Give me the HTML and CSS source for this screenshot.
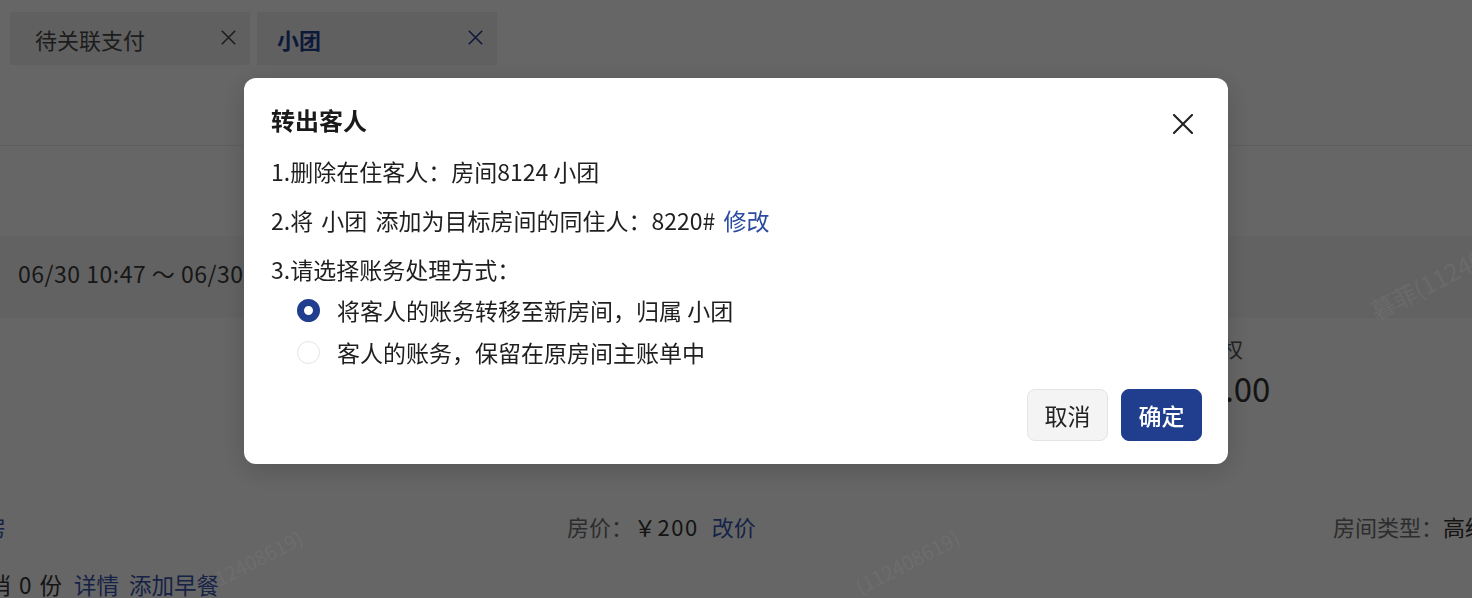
FILE: index.html
```html
<!DOCTYPE html>
<html lang="zh-CN">
<head>
<meta charset="utf-8">
<title>转出客人</title>
<link rel="stylesheet" href="styles.css">
</head>
<body>
<div class="page">
  <div class="tabbar">
    <div class="tab tab-first"><span class="tab-label">待关联支付</span>
      <svg class="tab-x" viewBox="0 0 15 15" width="15" height="15" aria-hidden="true"><path d="M0.8 0.8 L14.2 14.2 M14.2 0.8 L0.8 14.2" stroke="currentColor" stroke-width="1.6" fill="none"/></svg>
    </div>
    <div class="tab tab-active"><span class="tab-label">小团</span>
      <svg class="tab-x" viewBox="0 0 15 15" width="15" height="15" aria-hidden="true"><path d="M0.8 0.8 L14.2 14.2 M14.2 0.8 L0.8 14.2" stroke="currentColor" stroke-width="1.6" fill="none"/></svg>
    </div>
  </div>
  <div class="header"></div>
  <div class="spacer"></div>
  <div class="info-band"><span class="stay">06/30 10:47 ～ 06/30 12:00</span></div>
  <div class="stats">
    <div class="stat">
      <div class="stat-label">预授权</div>
      <div class="stat-value">¥0.00</div>
    </div>
  </div>
  <div class="detail-row">
    <div class="detail-cell cell-a"><a class="link">换房</a></div>
    <div class="detail-cell cell-b"><span class="label">房价：</span><span class="value price">￥200</span><a class="link link-price">改价</a></div>
    <div class="detail-cell cell-c"><span class="label">房间类型：</span><span class="value">高级大床房</span></div>
  </div>
  <div class="detail-row row-2">
    <div class="detail-cell cell-d"><span class="value spaced">已消 0 份</span><a class="link link-first">详情</a><a class="link link-tight">添加早餐</a></div>
  </div>
</div>

<div class="overlay">
  <div class="modal">
    <div class="modal-head">
      <div class="modal-title">转出客人</div>
      <svg class="modal-close" viewBox="0 0 20 20" width="20" height="20" aria-hidden="true">
        <path d="M1 1 L19 19 M19 1 L1 19" stroke="#222" stroke-width="2.1" stroke-linecap="square" fill="none"/>
      </svg>
    </div>
    <div class="modal-body">
      <div class="line">1.删除在住客人：房间8124 小团</div>
      <div class="line line-2">2.将 小团 添加为目标房间的同住人：8220# <a class="mlink">修改</a></div>
      <div class="line">3.请选择账务处理方式：</div>
      <div class="radios">
        <div class="radio-row"><span class="radio radio-on"></span><span>将客人的账务转移至新房间，归属 小团</span></div>
        <div class="radio-row"><span class="radio"></span><span>客人的账务，保留在原房间主账单中</span></div>
      </div>
    </div>
    <div class="modal-foot">
      <button class="btn btn-cancel">取消</button>
      <button class="btn btn-ok">确定</button>
    </div>
  </div>
</div>

<div class="wm wm-1">(112408619)</div>
<div class="wm wm-2">(112408619)</div>
<div class="wm wm-3">暮菲(112408619)</div>
</body>
</html>
```

FILE: styles.css
```css
* { box-sizing: border-box; }
html, body {
  margin: 0;
  padding: 0;
  width: 1472px;
  height: 598px;
  overflow: hidden;
  background: #fff;
  font-family: "Noto Sans CJK SC", "Noto Sans", sans-serif;
}
a { text-decoration: none; }

.page {
  width: 1472px;
  height: 598px;
  overflow: hidden;
  background: #fff;
  color: #3c3c3c;
}

.tabbar {
  height: 65px;
  padding-top: 12px;
  padding-left: 10px;
  display: flex;
  gap: 7px;
}
.tab {
  width: 240px;
  height: 53px;
  background: #f0f0f0;
  display: flex;
  align-items: center;
  justify-content: space-between;
  padding: 0 14px 0 25px;
  font-size: 22px;
  color: #4a4a4a;
}
.tab-active { padding-left: 20px; color: #233f8e; font-weight: 700; }
.tab-x { flex: none; margin-top: -2px; }

.header {
  height: 81px;
  border-bottom: 1px solid #ebebeb;
}
.spacer { height: 90px; }

.info-band {
  height: 82px;
  background: #f6f6f6;
  display: flex;
  align-items: center;
  padding-left: 18px;
  font-size: 23px;
  letter-spacing: 0.5px;
  color: #3a3a3a;
}
.stay { margin-top: -8px; white-space: nowrap; }

.stats {
  height: 181px;
  display: flex;
  padding-left: 1180px;
  padding-top: 16px;
}
.stat-label { font-size: 21px; color: #555; line-height: 28px; }
.stat-value { font-size: 33px; color: #333; line-height: 44px; margin-top: 4px; margin-left: 8px; }

.detail-row {
  display: flex;
  height: 50px;
  align-items: center;
  font-size: 22px;
  margin-top: 2px;
}
.row-2 { margin-top: 8px; font-size: 22.5px; }
.detail-cell { display: flex; align-items: center; white-space: nowrap; flex: none; }
.cell-a { width: 567px; margin-left: -38px; }
.cell-a .link { margin-left: 0; }
.cell-b { width: 766px; margin-left: 38px; }
.cell-d { margin-left: -34px; }
.label { color: #707070; }
.value { color: #333; }
.price { margin-left: 1px; letter-spacing: 1.5px; }
.spaced { word-spacing: 3px; }
.link { color: #3956ae; margin-left: 16px; }
.link-first { margin-left: 12px; }
.link-price { margin-left: 13px; }
.link-tight { margin-left: 10px; }

.overlay {
  position: fixed;
  inset: 0;
  background: rgba(0, 0, 0, 0.6);
  display: flex;
  justify-content: center;
  align-items: flex-start;
  padding-top: 78px;
}
.modal {
  width: 984px;
  height: 386px;
  background: #fff;
  border-radius: 12px;
  box-shadow: 0 6px 28px rgba(0, 0, 0, 0.18);
  padding: 26px 26px 23px 27px;
  display: flex;
  flex-direction: column;
  color: #1f1f1f;
}
.modal-head {
  display: flex;
  justify-content: space-between;
  align-items: flex-start;
}
.modal-title {
  font-size: 24px;
  line-height: 32px;
  font-weight: 700;
  color: #1a1a1a;
}
.modal-close {
  margin-top: 10px;
  margin-right: 9px;
  flex: none;
}
.modal-body {
  margin-top: 18.5px;
  display: flex;
  flex-direction: column;
  gap: 16px;
  font-size: 23px;
}
.line { line-height: 33px; height: 33px; white-space: nowrap; }
.line-2 { word-spacing: 3px; }
.mlink { color: #2b4ca0; }
.radios {
  margin-top: -8.5px;
  display: flex;
  flex-direction: column;
  gap: 8px;
  padding-left: 26px;
}
.radio-row {
  height: 34px;
  display: flex;
  align-items: center;
  gap: 17px;
  line-height: 34px;
}
.radio {
  width: 23px;
  height: 23px;
  border-radius: 50%;
  border: 1px solid #e4e4e4;
  background: #fff;
  flex: none;
}
.radio-on { border: 7px solid #213e8e; }

.modal-foot {
  margin-top: auto;
  display: flex;
  justify-content: flex-end;
  gap: 13px;
}
.btn {
  width: 81px;
  height: 52px;
  border-radius: 8px;
  font-family: inherit;
  font-size: 23px;
  padding: 0;
  cursor: pointer;
}
.btn-cancel { background: #f4f4f4; border: 1px solid #e4e4e4; color: #222; }
.btn-ok { background: #213e8e; border: 1px solid #213e8e; color: #fff; font-weight: 500; }

.wm {
  position: fixed;
  font-size: 20px;
  line-height: 24px;
  color: rgba(168, 168, 168, 0.1);
  transform-origin: left center;
  transform: rotate(-27deg);
  white-space: nowrap;
  pointer-events: none;
}
.wm-1 { left: 200px; top: 576px; }
.wm-2 { left: 857px; top: 576px; }
.wm-3 { left: 1372px; top: 300px; font-size: 24px; }
```
